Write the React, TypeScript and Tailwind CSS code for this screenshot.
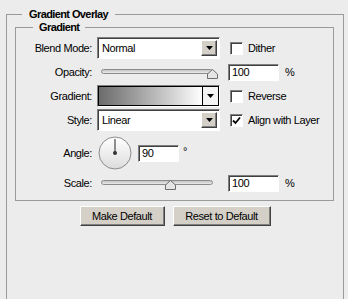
import React from "react";

const sunken =
  "border border-t-[#808080] border-l-[#808080] border-b-white border-r-white shadow-[inset_1px_1px_0_#404040]";
const raised =
  "border border-t-white border-l-white border-b-[#404040] border-r-[#404040] shadow-[inset_-1px_-1px_0_#808080] bg-[#d4d0c8]";

function Label({ children }: { children: React.ReactNode }) {
  return <div className="w-[76px] shrink-0 text-right pr-0 mr-[5px]">{children}</div>;
}

function Arrow() {
  return (
    <svg width="7" height="4" viewBox="0 0 7 4">
      <path d="M0 0H7L3.5 4Z" fill="#000" />
    </svg>
  );
}

function Select({ value }: { value: string }) {
  return (
    <div className={`w-[123px] h-[22px] bg-white flex items-stretch p-[2px] ${sunken}`}>
      <div className="flex-1 flex items-center pl-[2px]">{value}</div>
      <div className={`w-[16px] flex items-center justify-center ${raised}`}>
        <Arrow />
      </div>
    </div>
  );
}

function Checkbox({ label, checked }: { label: string; checked?: boolean }) {
  return (
    <div className="flex items-center ml-[10px]">
      <div className={`w-[13px] h-[13px] bg-white flex items-center justify-center ${sunken}`}>
        {checked && (
          <svg width="9" height="9" viewBox="0 0 9 9">
            <path d="M1 4.5L3.5 7L8 1.5" fill="none" stroke="#000" strokeWidth="1.8" />
          </svg>
        )}
      </div>
      <span className="ml-[5px]">{label}</span>
    </div>
  );
}

function Slider({ pos }: { pos: number }) {
  return (
    <div className="relative w-[123px] h-[17px]">
      <div className="absolute left-[4px] top-[5px] w-[112px] h-[5px] rounded-full border border-[#8c8c8c] bg-gradient-to-b from-[#c4c4c4] to-[#eaeaea]" />
      <svg
        className="absolute top-[5px]"
        style={{ left: pos - 5 }}
        width="11"
        height="10"
        viewBox="0 0 11 10"
      >
        <path d="M0.5 9.5V5L5.5 0.5L10.5 5V9.5Z" fill="#e4e4e4" stroke="#6e6e6e" />
      </svg>
    </div>
  );
}

function NumInput({ value, w }: { value: string; w: string }) {
  return (
    <div className={`${w} h-[17px] bg-white flex items-center pl-[3px] ${sunken}`}>{value}</div>
  );
}

export default function App() {
  return (
    <div className="w-[348px] h-[299px] overflow-hidden bg-[#ececec] text-black text-[11px] tracking-[-0.4px] font-['Liberation_Sans',Arial,sans-serif]">
      <fieldset className="ml-[6px] mt-[8px] w-[338px] h-[330px] border border-[#9a9a9a]">
        <legend className="ml-[15px] px-[7px] leading-[12px] font-bold tracking-[-0.6px]">
          Gradient Overlay
        </legend>
        <fieldset className="ml-[8px] mt-[1px] w-[319px] border border-[#9a9a9a]">
          <legend className="ml-[17px] px-[6px] leading-[12px] font-bold tracking-[-0.6px]">
            Gradient
          </legend>
          <div className="flex flex-col pt-[4px] pb-[8px]">
            <div className="flex items-center h-[22px]">
              <Label>Blend Mode:</Label>
              <Select value="Normal" />
              <Checkbox label="Dither" />
            </div>
            <div className="flex items-center h-[17px] mt-[5px]">
              <Label>Opacity:</Label>
              <Slider pos={115} />
              <div className="ml-[8px]">
                <NumInput value="100" w="w-[51px]" />
              </div>
              <span className="ml-[6px]">%</span>
            </div>
            <div className="flex items-center h-[22px] mt-[4px]">
              <Label>Gradient:</Label>
              <div className={`w-[123px] h-[22px] flex ${sunken} shadow-none`}>
                <div className="flex-1 flex border border-black">
                  <div className="flex-1 bg-gradient-to-r from-[#6c6c6c] to-white" />
                  <div className="w-[16px] border-l border-black bg-[#f4f4f4] flex items-center justify-center">
                    <Arrow />
                  </div>
                </div>
              </div>
              <Checkbox label="Reverse" />
            </div>
            <div className="flex items-center h-[22px] mt-[2px]">
              <Label>Style:</Label>
              <Select value="Linear" />
              <Checkbox label="Align with Layer" checked />
            </div>
            <div className="flex items-center h-[34px] mt-[5px]">
              <Label>Angle:</Label>
              <svg className="ml-[1px]" width="34" height="34" viewBox="0 0 34 34">
                <defs>
                  <linearGradient id="dial" x1="0" y1="0" x2="0" y2="1">
                    <stop offset="0" stopColor="#ffffff" />
                    <stop offset="1" stopColor="#dcdcdc" />
                  </linearGradient>
                </defs>
                <circle cx="17" cy="17" r="16" fill="url(#dial)" stroke="#8c8c8c" />
                <line x1="17" y1="3" x2="17" y2="17" stroke="#555" strokeWidth="1.3" />
                <circle cx="17" cy="17" r="2" fill="#333" />
              </svg>
              <div className="ml-[6px]">
                <NumInput value="90" w="w-[41px]" />
              </div>
              <span className="ml-[4px] -mt-[3px]">°</span>
            </div>
            <div className="flex items-center h-[17px] mt-[5px]">
              <Label>Scale:</Label>
              <Slider pos={73} />
              <div className="ml-[8px]">
                <NumInput value="100" w="w-[51px]" />
              </div>
              <span className="ml-[6px]">%</span>
            </div>
          </div>
        </fieldset>
        <div className="flex justify-center gap-[8px] mt-[5px]">
          <button className={`w-[85px] h-[20px] ${raised}`}>Make Default</button>
          <button className={`w-[98px] h-[20px] ${raised}`}>Reset to Default</button>
        </div>
      </fieldset>
    </div>
  );
}
